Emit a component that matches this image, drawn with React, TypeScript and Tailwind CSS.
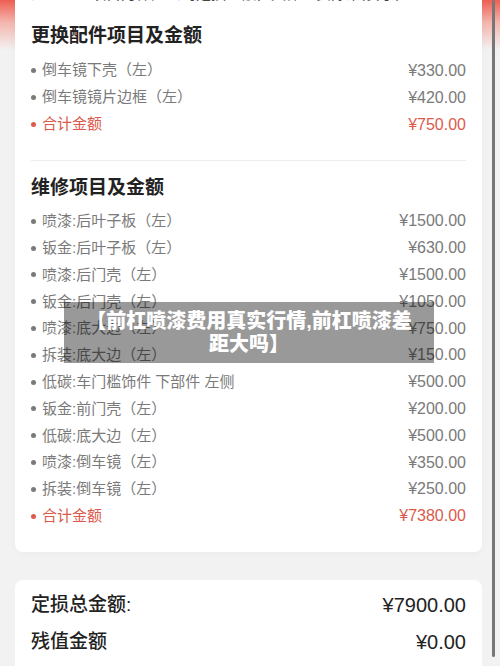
const parts = [
  { name: '倒车镜下壳（左）', price: '¥330.00' },
  { name: '倒车镜镜片边框（左）', price: '¥420.00' },
]

const repairs = [
  { name: '喷漆:后叶子板（左）', price: '¥1500.00' },
  { name: '钣金:后叶子板（左）', price: '¥630.00' },
  { name: '喷漆:后门壳（左）', price: '¥1500.00' },
  { name: '钣金:后门壳（左）', price: '¥1050.00' },
  { name: '喷漆:底大边（左）', price: '¥750.00' },
  { name: '拆装:底大边（左）', price: '¥150.00' },
  { name: '低碳:车门槛饰件 下部件 左侧', price: '¥500.00' },
  { name: '钣金:前门壳（左）', price: '¥200.00' },
  { name: '低碳:底大边（左）', price: '¥500.00' },
  { name: '喷漆:倒车镜（左）', price: '¥350.00' },
  { name: '拆装:倒车镜（左）', price: '¥250.00' },
]

const font = { fontFamily: '"Liberation Sans", "Noto Sans CJK SC", sans-serif' }

function Row({ name, price, total = false, tall = false }: {
  name: string
  price: string
  total?: boolean
  tall?: boolean
}) {
  return (
    <div className={`flex items-center justify-between ${tall ? 'h-[27px]' : 'h-[26.8px]'} ${total ? 'text-[#dc5a4c]' : 'text-[#7a7a7a]'}`}>
      <div className="flex items-center text-[15px]">
        <span className={`w-[5px] h-[5px] rounded-full mr-[6px] ${total ? 'bg-[#dc5a4c]' : 'bg-[#7a7a7a]'}`} />
        <span>{name}</span>
      </div>
      <span className="text-[16px]">{price}</span>
    </div>
  )
}

export default function App() {
  return (
    <div
      className="relative h-[666px] w-[500px] overflow-hidden bg-[linear-gradient(to_bottom,#ee5e52_0px,#f4b4ad_22px,#f2f2f2_50px)]"
      style={font}
    >
      <div className="-mt-[29px] pl-[15px] pr-[18px] flex flex-col gap-[28px]">

        {/* Parts + repairs card */}
        <div className="bg-white rounded-lg px-4 pt-3 pb-[22px] shadow-[0_2px_8px_rgba(0,0,0,0.03)]">
          <div className="h-[27px] leading-[21px] text-[15px] text-[#444] whitespace-nowrap overflow-hidden">
            注：以上项目为保险公司定损金额，具体以实际维修为准
          </div>

          <div className="mt-[12px] h-[28px] leading-[28px] text-[19px] font-bold text-[#222]">更换配件项目及金额</div>
          <div className="mt-[7px]">
            {parts.map((p) => (
              <Row key={p.name} name={p.name} price={p.price} tall />
            ))}
            <Row name="合计金额" price="¥750.00" total tall />
          </div>

          <div className="mt-[22px] h-px bg-[#ececec]" />

          <div className="mt-[13px] h-[28px] leading-[28px] text-[19px] font-bold text-[#222]">维修项目及金额</div>
          <div className="mt-[6px]">
            {repairs.map((r, i) => (
              <Row key={i} name={r.name} price={r.price} />
            ))}
            <Row name="合计金额" price="¥7380.00" total />
          </div>
        </div>

        {/* Totals card */}
        <div className="bg-white rounded-lg px-4 pt-[7px] pb-6 text-[#222]">
          <div className="flex items-center justify-between h-[37px] font-medium">
            <span className="text-[19px]">定损总金额:</span>
            <span className="text-[20px]">¥7900.00</span>
          </div>
          <div className="flex items-center justify-between h-[37px] font-medium">
            <span className="text-[19px]">残值金额</span>
            <span className="text-[20px]">¥0.00</span>
          </div>
        </div>
      </div>

      {/* Title overlay */}
      <div className="absolute left-[64px] top-[302px] w-[370px] h-[61px] bg-black/40 flex items-center justify-center px-5">
        <p className="text-white text-[20px] font-extrabold leading-[23px] text-center">
          【前杠喷漆费用真实行情,前杠喷漆差距大吗】
        </p>
      </div>

      {/* Scrollbar */}
      <div className="absolute right-[5px] top-0 w-[3px] h-[657px] rounded-full bg-[#777]" />
    </div>
  )
}
